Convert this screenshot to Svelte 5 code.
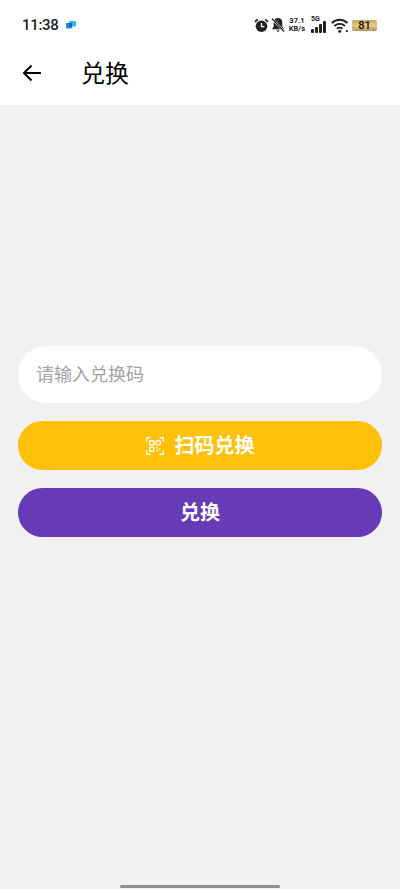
<script>
  const bars = [4, 6, 9, 12];
</script>

<div class="screen">
  <header class="top">
    <div class="status">
      <div class="status-left">
        <span class="time">11:38</span>
        <span class="app-badge">
          <svg width="10" height="8" viewBox="0 0 10 8"><rect x="3" y="0" width="7" height="5.5" fill="#1cc4f0" /><rect x="0" y="2" width="6" height="5.5" fill="#1a8fe8" /><rect x="3" y="2" width="3" height="3.5" fill="#1450c8" /></svg>
        </span>
      </div>
      <div class="status-right">
        <svg class="alarm" width="15" height="15" viewBox="0 0 16 16">
          <circle cx="8" cy="8.8" r="6.2" fill="#222" />
          <path d="M1 4.2 4 1.4M15 4.2 12 1.4" stroke="#222" stroke-width="1.8" fill="none" />
          <path d="M8 5.2v4h3" stroke="#fff" stroke-width="1.4" fill="none" />
        </svg>
        <svg width="14" height="16" viewBox="0 0 14 16">
          <path d="M7 1c-2.800 0-4.300 2.100-4.300 4.700v3.800L1 12.300h12l-1.700-2.800V5.700C11.300 3.100 9.800 1 7 1z" fill="#222" />
          <path d="M5.300 13.300h3.400L7 15.200z" fill="#222" />
          <path d="M1 1.500l12 13" stroke="#fff" stroke-width="2.400" />
          <path d="M1 1.500l12 13" stroke="#222" stroke-width="1.200" />
        </svg>
        <div class="speed"><span>37.1</span><span>KB/s</span></div>
        <div class="signal">
          <span class="five-g">5G</span>
          <div class="bars">
            {#each bars as h}
              <i style="height:{h}px"></i>
            {/each}
          </div>
        </div>
        <svg class="wifi" width="18" height="15" viewBox="0 0 18 15">
          <path d="M.8 5C5.300 .6 12 .6 16.500 5M3.300 8C6.400 5.100 11 5.100 14 8M5.800 10.800c1.800-1.500 3.900-1.500 5.700 0" stroke="#222" stroke-width="1.900" fill="none" />
          <circle cx="8.700" cy="13.200" r="1.500" fill="#222" />
          <circle cx="16" cy="13.200" r="1.100" fill="#222" />
        </svg>
        <div class="battery"><span>81</span></div>
      </div>
    </div>
    <div class="nav">
      <svg class="back" width="20" height="18" viewBox="0 0 20 18">
        <path d="M19 9H2M9.500 1.500 2 9l7.500 7.500" stroke="#000" stroke-width="2" fill="none" />
      </svg>
      <h1>兑换</h1>
    </div>
  </header>

  <main class="form">
    <input class="code" type="text" placeholder="请输入兑换码" />
    <button class="btn scan">
      <svg width="18" height="18" viewBox="0 0 18 18" fill="none" stroke="#fff" stroke-width="1.400">
        <path d="M.7 4.500V.7h3.800M13.500 .7h3.800v3.800M.7 13.500v3.800h3.800M13.500 17.300h3.800v-3.800" />
        <rect x="3.700" y="3.700" width="4.200" height="4.200" rx=".8" />
        <rect x="10.100" y="3.700" width="4.200" height="4.200" rx=".8" />
        <rect x="3.700" y="10.100" width="4.200" height="4.200" rx=".8" />
        <path d="M10 10h1.600v1.600H10zM12.700 11.600h1.600v1.300h-1.600zM10.500 13h1.700v1.400h-1.700z" fill="#fff" stroke="none" />
      </svg>
      <span>扫码兑换</span>
    </button>
    <button class="btn redeem">兑换</button>
  </main>

  <div class="home-bar"></div>
</div>

<style>
  :global(body) {
    margin: 0;
    background: #f1f1f1;
  }

  .screen {
    position: relative;
    display: flex;
    flex-direction: column;
    height: 889px;
    background: #f1f1f1;
    font-family: "Noto Sans CJK SC", "Noto Sans", sans-serif;
    overflow: hidden;
  }

  .top {
    height: 105px;
    flex-shrink: 0;
    background: #fff;
  }

  .status {
    display: flex;
    justify-content: space-between;
    align-items: center;
    height: 41px;
    padding: 9px 23px 0 22px;
    box-sizing: border-box;
    color: #222;
  }

  .status-left {
    display: flex;
    align-items: center;
    gap: 6px;
  }

  .time {
    font-family: Roboto, sans-serif;
    font-size: 15px;
    font-weight: 500;
    letter-spacing: -.3px;
  }

  .app-badge {
    display: flex;
    align-items: center;
    justify-content: center;
    width: 12px;
    height: 12px;
    border-radius: 3px;
    background: #fff;
  }

  .status-right {
    display: flex;
    align-items: center;
    gap: 2px;
  }

  .speed {
    display: flex;
    flex-direction: column;
    align-items: center;
    margin: 0 4px 0 2px;
    font-family: Roboto, sans-serif;
    font-size: 7.500px;
    font-weight: 700;
    line-height: 8px;
  }

  .signal {
    position: relative;
    display: flex;
    align-items: flex-end;
    width: 16px;
    height: 16px;
    margin-right: 2px;
  }

  .five-g {
    position: absolute;
    left: 0;
    top: -1px;
    font-family: Roboto, sans-serif;
    font-size: 7px;
    font-weight: 700;
    line-height: 7px;
  }

  .bars {
    display: flex;
    align-items: flex-end;
    gap: 1.500px;
    height: 12px;
  }

  .bars i {
    width: 2.500px;
    background: #222;
    border-radius: 1px;
  }

  .battery {
    display: flex;
    align-items: center;
    justify-content: center;
    width: 25px;
    height: 11px;
    margin-left: 1px;
    border-radius: 2px;
    background: linear-gradient(#c4a85a, #e0c98a 50%, #b4964c);
  }

  .battery span {
    font-family: Roboto, sans-serif;
    font-size: 11px;
    font-weight: 500;
    color: #111;
  }

  .nav {
    display: flex;
    align-items: center;
    height: 64px;
    padding-left: 22px;
  }

  .back {
    flex-shrink: 0;
    margin-bottom: 1px;
  }

  .nav h1 {
    margin: 0 0 2px 39px;
    font-size: 24px;
    font-weight: 400;
    line-height: 1;
    color: #000;
  }

  .form {
    display: flex;
    flex-direction: column;
    gap: 18px;
    padding: 241px 18px 0;
  }

  .code {
    height: 57px;
    padding: 0 18px 3px;
    border: 0;
    border-radius: 29px;
    background: #fff;
    font-family: inherit;
    font-size: 18px;
    outline: none;
    box-sizing: border-box;
  }

  .code::placeholder {
    color: #a3a3a3;
  }

  .btn {
    display: flex;
    align-items: center;
    justify-content: center;
    gap: 11px;
    height: 49px;
    padding: 0 0 2px;
    border: 0;
    border-radius: 25px;
    color: #fff;
    font-family: inherit;
    font-size: 20px;
    font-weight: 700;
  }

  .scan {
    background: #ffc107;
  }

  .scan svg {
    margin-top: 2px;
  }

  .redeem {
    background: #673ab7;
  }

  .home-bar {
    position: absolute;
    left: 120px;
    bottom: 1px;
    width: 160px;
    height: 3px;
    border-radius: 2px;
    background: #8f8f8f;
  }
</style>
